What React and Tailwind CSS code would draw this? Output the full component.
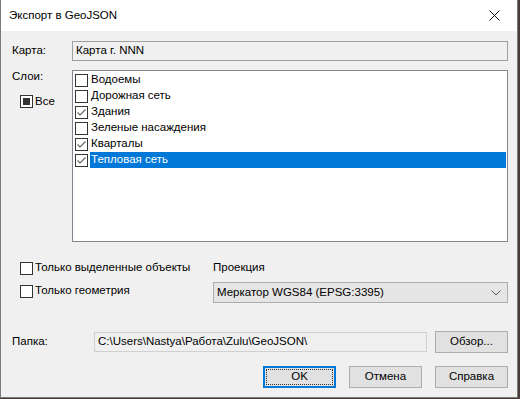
import React from "react";

const font = { fontFamily: '"Liberation Sans", Arial, sans-serif' };

function Check({ checked }) {
  return (
    <svg width="13" height="13" viewBox="0 0 13 13" className="shrink-0">
      <rect x="0.5" y="0.5" width="12" height="12" fill="#fff" stroke="#333" />
      {checked && (
        <path d="M2.5 6.5 L5 9 L10.5 3.5" fill="none" stroke="#666" strokeWidth="1.2" />
      )}
    </svg>
  );
}

function Tri() {
  return (
    <svg width="13" height="13" viewBox="0 0 13 13" className="shrink-0">
      <rect x="0.5" y="0.5" width="12" height="12" fill="#fff" stroke="#333" />
      <rect x="3" y="3" width="7" height="7" fill="#333" />
    </svg>
  );
}

const layers = [
  ["Водоемы", false],
  ["Дорожная сеть", false],
  ["Здания", true],
  ["Зеленые насаждения", false],
  ["Кварталы", true],
  ["Тепловая сеть", true],
];

function Btn({ children, primary }) {
  return (
    <div
      className={
        "w-[73px] h-[22px] flex items-center justify-center text-[11.5px] text-black bg-[#e1e1e1] " +
        (primary ? "border-2 border-[#0078d7] p-[1px]" : "border border-[#adadad]")
      }
    >
      {primary ? (
        <div className="w-full h-full border border-dotted border-[#333] flex items-center justify-center">
          {children}
        </div>
      ) : (
        children
      )}
    </div>
  );
}

export default function App() {
  return (
    <div className="w-[520px] h-[399px] bg-[#4a3a3a] overflow-hidden" style={font}>
      <div className="w-[518px] h-[398px] bg-[#f0f0f0] border-l border-r border-b border-[#7a7a7a] flex flex-col">
        <div className="h-[31px] bg-white flex items-center shrink-0">
          <div className="pl-[8px] text-[11.5px] text-black flex-1">Экспорт в GeoJSON</div>
          <div className="w-[46px] h-full flex items-center justify-center">
            <svg width="11" height="11" viewBox="0 0 11 11">
              <path d="M0.5 0.5 L10.5 10.5 M10.5 0.5 L0.5 10.5" stroke="#111" strokeWidth="1" />
            </svg>
          </div>
        </div>

        <div className="pl-[11px] pr-[9px] flex flex-col text-[11.5px] text-black">
          <div className="mt-[10px] flex items-center h-[20px]">
            <div className="w-[60px]">Карта:</div>
            <div className="flex-1 h-[20px] border border-[#a0a0a0] bg-[#f0f0f0] flex items-center pl-[3px]">
              Карта г. NNN
            </div>
          </div>

          <div className="mt-[9px] flex h-[172px]">
            <div className="w-[60px] flex flex-col">
              <div className="mt-[-2px] leading-[16px]">Слои:</div>
              <div className="mt-[9px] ml-[8px] flex items-center gap-[2px] leading-[16px]">
                <Tri />
                <span>Все</span>
              </div>
            </div>
            <div className="flex-1 h-full border border-[#828790] bg-white pt-[1px] pl-[2px] pr-[1px]">
              {layers.map(([name, c], i) => (
                <div key={name} className="h-[16px] flex items-center">
                  <Check checked={c} />
                  <div
                    className={
                      "ml-[2px] h-full flex items-center pl-[1px] " +
                      (i === 5 ? "flex-1 bg-[#0078d7] text-white" : "")
                    }
                  >
                    {name}
                  </div>
                </div>
              ))}
            </div>
          </div>

          <div className="mt-[18px] flex">
            <div className="w-[201px] pl-[8px] flex flex-col">
              <div className="h-[16px] flex items-center gap-[2px]">
                <Check />
                <span>Только выделенные объекты</span>
              </div>
              <div className="mt-[7px] h-[16px] flex items-center gap-[2px]">
                <Check />
                <span>Только геометрия</span>
              </div>
            </div>
            <div className="flex-1 flex flex-col">
              <div className="h-[16px] flex items-center">Проекция</div>
              <div className="mt-[6px] h-[21px] border border-[#adadad] bg-[#e5e5e5] flex items-center pl-[3px] pr-[6px]">
                <span className="flex-1">Меркатор WGS84 (EPSG:3395)</span>
                <svg width="10" height="6" viewBox="0 0 10 6">
                  <path d="M0.5 0.5 L5 5 L9.5 0.5" fill="none" stroke="#555" strokeWidth="1" />
                </svg>
              </div>
            </div>
          </div>

          <div className="mt-[28px] flex items-center">
            <div className="w-[82px]">Папка:</div>
            <div className="w-[333px] h-[20px] border border-[#d0d0d0] bg-[#f0f0f0] flex items-center pl-[3px]">
              C:\Users\Nastya\Работа\Zulu\GeoJSON\
            </div>
            <div className="ml-auto">
              <Btn>Обзор...</Btn>
            </div>
          </div>

          <div className="mt-[13px] flex justify-end gap-[13px]">
            <Btn primary>OK</Btn>
            <Btn>Отмена</Btn>
            <Btn>Справка</Btn>
          </div>
        </div>
      </div>
    </div>
  );
}
